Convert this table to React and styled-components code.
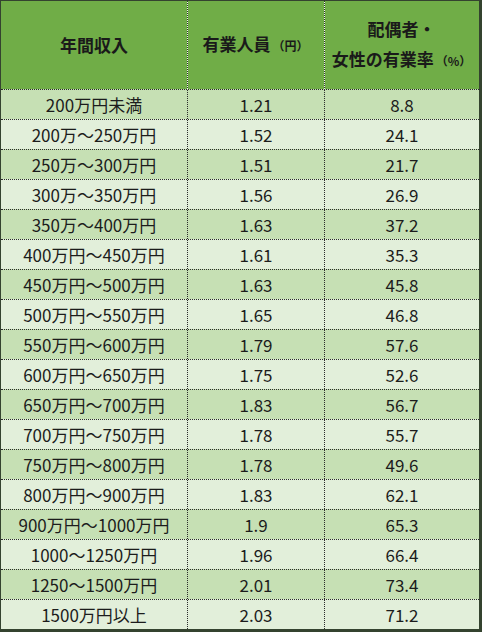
import React from "react";
import styled, { createGlobalStyle } from "styled-components";

const GlobalStyle = createGlobalStyle`
  html, body {
    margin: 0;
    padding: 0;
    background: #ffffff;
  }
  body {
    font-family: "Noto Sans CJK JP", "Noto Sans", sans-serif;
    color: #1c1c1c;
  }
`;

const rows = [
  ["200万円未満", "1.21", "8.8"],
  ["200万～250万円", "1.52", "24.1"],
  ["250万～300万円", "1.51", "21.7"],
  ["300万～350万円", "1.56", "26.9"],
  ["350万～400万円", "1.63", "37.2"],
  ["400万円～450万円", "1.61", "35.3"],
  ["450万円～500万円", "1.63", "45.8"],
  ["500万円～550万円", "1.65", "46.8"],
  ["550万円～600万円", "1.79", "57.6"],
  ["600万円～650万円", "1.75", "52.6"],
  ["650万円～700万円", "1.83", "56.7"],
  ["700万円～750万円", "1.78", "55.7"],
  ["750万円～800万円", "1.78", "49.6"],
  ["800万円～900万円", "1.83", "62.1"],
  ["900万円～1000万円", "1.9", "65.3"],
  ["1000～1250万円", "1.96", "66.4"],
  ["1250～1500万円", "2.01", "73.4"],
  ["1500万円以上", "2.03", "71.2"],
];

const Sheet = styled.div`
  width: 482px;
  height: 632px;
  box-sizing: border-box;
  border-style: solid;
  border-color: #34432f;
  border-width: 1px 3px 3px 1px;
  display: flex;
  flex-direction: column;
  overflow: hidden;
`;

const Grid = styled.div`
  display: grid;
  grid-template-columns: 186px 137px 155px;
`;

const HeadRow = styled(Grid)`
  height: 88px;
  background: #70ad47;
`;

const HeadCell = styled.div`
  display: flex;
  flex-direction: column;
  align-items: center;
  justify-content: center;
  font-size: 17px;
  font-weight: 700;
  line-height: 30px;
  color: #1a1a1a;
  box-sizing: border-box;
  ${({ $divider }) =>
    $divider &&
    `
    background-image: repeating-linear-gradient(to bottom, #2a3a22 0 1px, #f4f8f0 1px 2px);
    background-size: 1px 100%;
    background-repeat: no-repeat;
    background-position: left top;
  `}
`;

const Unit = styled.span`
  font-size: 12px;
  font-weight: 700;
  margin-left: 2px;
`;

const BodyRow = styled(Grid)`
  height: 30px;
  box-sizing: border-box;
  border-top: 1px dotted #2b2b2b;
  background: ${({ $odd }) => ($odd ? "#c6e0b4" : "#e2efda")};
`;

const Cell = styled.div`
  display: flex;
  align-items: center;
  justify-content: center;
  font-size: 17px;
  line-height: 1;
  color: #1c1c1c;
  box-sizing: border-box;
  border-left: ${({ $divider }) => ($divider ? "1px dotted #2b2b2b" : "none")};
  padding-bottom: 1px;
`;

export default function App() {
  return (
    <>
      <GlobalStyle />
      <Sheet>
        <HeadRow>
          <HeadCell>年間収入</HeadCell>
          <HeadCell $divider>
            <div>
              有業人員<Unit>（円）</Unit>
            </div>
          </HeadCell>
          <HeadCell $divider>
            <div>配偶者・</div>
            <div>
              女性の有業率<Unit>（%）</Unit>
            </div>
          </HeadCell>
        </HeadRow>
        {rows.map((r, i) => (
          <BodyRow key={r[0]} $odd={i % 2 === 0}>
            <Cell>{r[0]}</Cell>
            <Cell $divider>{r[1]}</Cell>
            <Cell $divider>{r[2]}</Cell>
          </BodyRow>
        ))}
      </Sheet>
    </>
  );
}
